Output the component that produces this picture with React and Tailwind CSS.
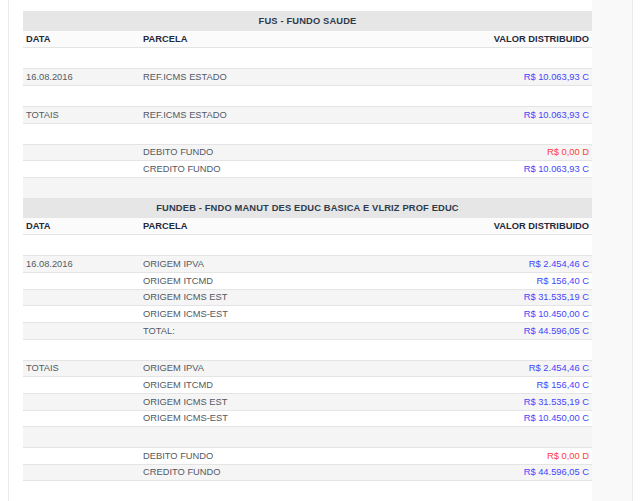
import React from "react"

const fus = [
  { type: "empty", bg: "white" },
  { data: "16.08.2016", parcela: "REF.ICMS ESTADO", valor: "R$ 10.063,93 C", bg: "gray" },
  { type: "empty", bg: "white" },
  { data: "TOTAIS", parcela: "REF.ICMS ESTADO", valor: "R$ 10.063,93 C", bg: "gray" },
  { type: "empty", bg: "white" },
  { parcela: "DEBITO FUNDO", valor: "R$ 0,00 D", bg: "gray", debit: true },
  { parcela: "CREDITO FUNDO", valor: "R$ 10.063,93 C", bg: "white" },
  { type: "empty", bg: "gray" },
]

const fundeb = [
  { type: "empty", bg: "white" },
  { data: "16.08.2016", parcela: "ORIGEM IPVA", valor: "R$ 2.454,46 C", bg: "gray" },
  { parcela: "ORIGEM ITCMD", valor: "R$ 156,40 C", bg: "white" },
  { parcela: "ORIGEM ICMS EST", valor: "R$ 31.535,19 C", bg: "gray" },
  { parcela: "ORIGEM ICMS-EST", valor: "R$ 10.450,00 C", bg: "white" },
  { parcela: "TOTAL:", valor: "R$ 44.596,05 C", bg: "gray" },
  { type: "empty", bg: "white" },
  { data: "TOTAIS", parcela: "ORIGEM IPVA", valor: "R$ 2.454,46 C", bg: "gray" },
  { parcela: "ORIGEM ITCMD", valor: "R$ 156,40 C", bg: "white" },
  { parcela: "ORIGEM ICMS EST", valor: "R$ 31.535,19 C", bg: "gray" },
  { parcela: "ORIGEM ICMS-EST", valor: "R$ 10.450,00 C", bg: "white" },
  { type: "empty", bg: "gray" },
  { parcela: "DEBITO FUNDO", valor: "R$ 0,00 D", bg: "white", debit: true },
  { parcela: "CREDITO FUNDO", valor: "R$ 44.596,05 C", bg: "gray" },
]

function Row({ row }) {
  const bg = row.bg === "gray" ? "bg-[#f5f5f5]" : "bg-white"
  if (row.type === "empty") {
    return <div className={`h-[21px] border-t border-[#e4e4e4] ${bg}`} />
  }
  return (
    <div className={`h-[16.67px] border-t border-[#e4e4e4] flex items-center px-[3px] text-[#535a64] ${bg}`}>
      <div className="w-[117px] pt-px">{row.data}</div>
      <div className="flex-1 pt-px">{row.parcela}</div>
      <div className={`pt-px ${row.debit ? "text-[#ff4040]" : "text-[#4646fa]"}`}>{row.valor}</div>
    </div>
  )
}

function Fundo({ title, rows }) {
  return (
    <div>
      <div className="h-[19.67px] bg-[#e6e6e6] flex items-center justify-center pt-px font-bold text-[#2e3b4c] tracking-[0.15px]">
        {title}
      </div>
      <div className="h-[16.67px] bg-[#fbfbfb] flex items-center px-[3px] pt-px font-bold text-[#1f2a3b]">
        <div className="w-[117px]">DATA</div>
        <div className="flex-1">PARCELA</div>
        <div>VALOR DISTRIBUIDO</div>
      </div>
      {rows.map((r, i) => (
        <Row key={i} row={r} />
      ))}
    </div>
  )
}

export default function App() {
  return (
    <div className="h-[501px] bg-white overflow-hidden font-['Liberation_Sans',Arial,sans-serif] text-[9.33px] leading-none">
      <div className="ml-[8px] w-[625px] h-full border-x border-[#ebebeb] flex">
        <div className="pl-[14px] pt-[11px]">
          <div className="w-[569px] border-b border-[#e4e4e4]">
            <Fundo title="FUS - FUNDO SAUDE" rows={fus} />
            <Fundo title="FUNDEB - FNDO MANUT DES EDUC BASICA E VLRIZ PROF EDUC" rows={fundeb} />
          </div>
        </div>
        <div className="flex-1 bg-[#f9f9f9]" />
      </div>
    </div>
  )
}
